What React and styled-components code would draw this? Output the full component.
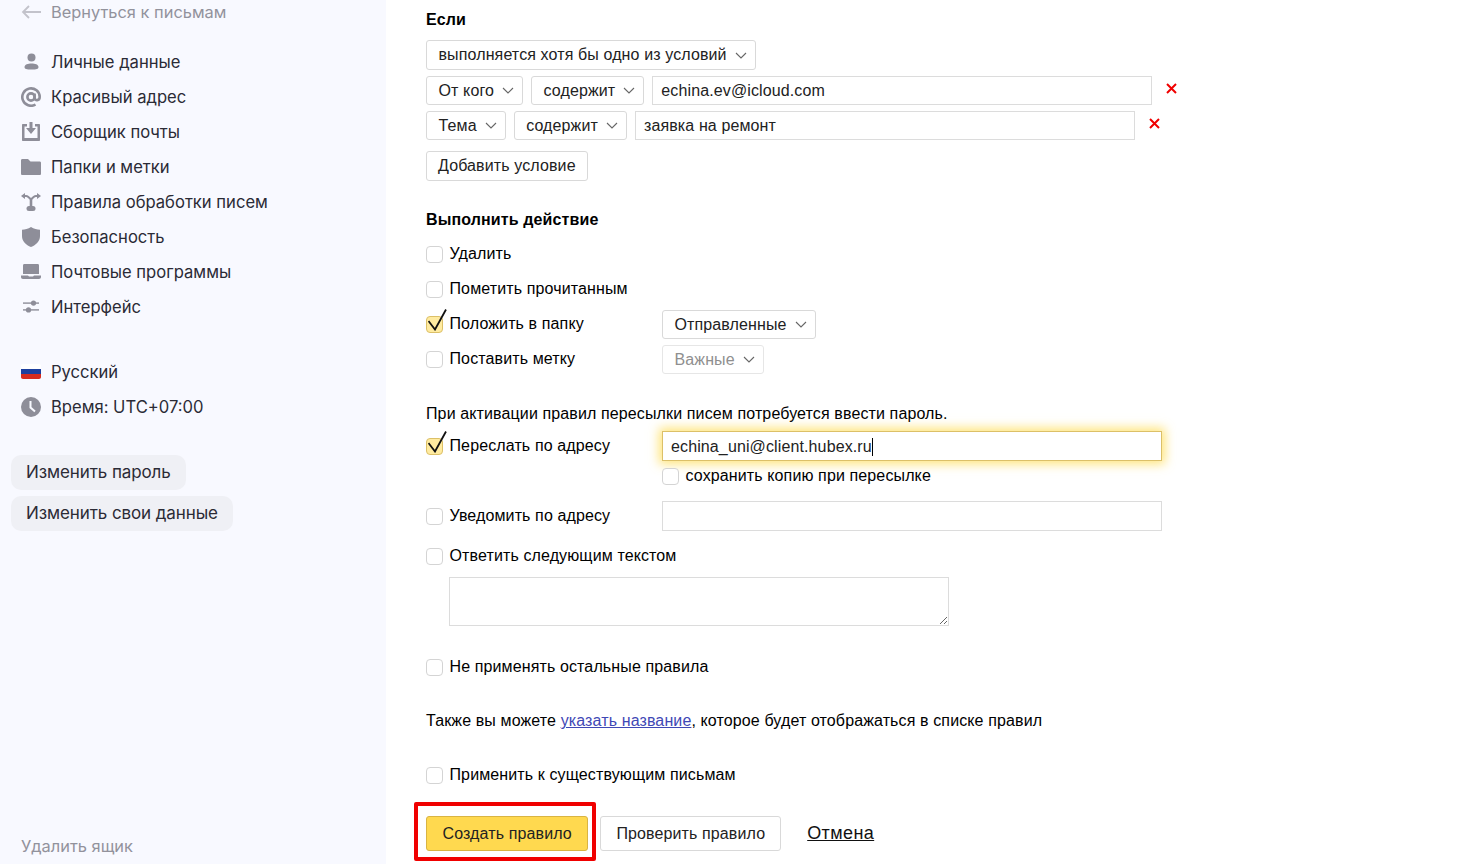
import React from 'react';
import styled, { createGlobalStyle } from 'styled-components';

const Global = createGlobalStyle`
  html, body { margin: 0; padding: 0; height: 100%; overflow: hidden; background: #fff; }
  * { box-sizing: border-box; }
`;

const Page = styled.div`
  display: flex;
  width: 1457px;
  height: 864px;
  overflow: hidden;
`;

const Sidebar = styled.aside`
  width: 386px;
  height: 864px;
  flex: none;
  display: flex;
  flex-direction: column;
  background: #f8f9ff;
  font-family: Inter, "Noto Sans", sans-serif;
  font-size: 16.6px;
  color: #2b2b36;
`;

const BackLink = styled.a`
  display: flex;
  align-items: center;
  gap: 10px;
  height: 24px;
  padding-left: 21px;
  margin-bottom: 20px;
  font-size: 16.4px;
  color: #92929c;
`;

const NavRow = styled.a`
  display: flex;
  align-items: center;
  gap: 10px;
  height: 35px;
  padding-left: 21px;
`;

const IconBox = styled.span`
  display: flex;
  width: 20px;
  height: 20px;
  flex: none;
  align-items: center;
  justify-content: center;
`;

const NavGroup = styled.nav`
  display: flex;
  flex-direction: column;
  margin-bottom: ${(p) => p.$gap || 30}px;
`;

const PillGroup = styled.div`
  display: flex;
  flex-direction: column;
  align-items: flex-start;
  gap: 6px;
  padding-left: 11px;
`;

const Pill = styled.button`
  height: 35px;
  padding: 0 15px 2px;
  border: 0;
  border-radius: 10px;
  background: #eff0f5;
  color: #2b2b36;
  font: inherit;
  font-size: 17px;
  letter-spacing: -0.1px;
`;

const RemoveBox = styled.a`
  margin-top: auto;
  padding: 0 0 7px 21px;
  line-height: 22px;
  font-size: 16.4px;
  color: #92929c;
`;

const Main = styled.main`
  flex: 1;
  padding-left: 40px;
  font-family: "Liberation Sans", Arial, sans-serif;
  font-size: 16px;
  letter-spacing: 0.12px;
  color: #000;
`;

const Heading = styled.h3`
  height: 20px;
  margin: ${(p) => p.$top}px 0 0;
  font-size: 16px;
  line-height: 20px;
  font-weight: 700;
`;

const Row = styled.div`
  display: flex;
  align-items: center;
  gap: 8px;
  height: ${(p) => p.$h || 30}px;
  margin-top: ${(p) => p.$top || 0}px;
`;

const IndentedRow = styled(Row)`
  padding-left: 236px;
`;

const Select = styled.div`
  display: flex;
  align-items: center;
  gap: 8px;
  height: ${(p) => p.$h || 29}px;
  padding: 0 8px 0 11.5px;
  background: #fff;
  border: 1px solid ${(p) => (p.$disabled ? '#e6e6e6' : '#d9d9d9')};
  border-radius: 3px;
  color: ${(p) => (p.$disabled ? '#8f8f8f' : '#222')};
  white-space: nowrap;
`;

const Button = styled.button`
  height: ${(p) => p.$h || 30}px;
  padding: 0 ${(p) => p.$pad || 11}px;
  background: #fff;
  border: 1px solid #d9d9d9;
  border-radius: 3px;
  color: #222;
  font: inherit;
  letter-spacing: inherit;
`;

const PrimaryButton = styled(Button)`
  background: #ffd94f;
  border-color: #d9b443;
`;

const Field = styled.div`
  display: flex;
  align-items: center;
  width: 500px;
  height: ${(p) => p.$h || 29}px;
  padding: 0 8px;
  background: #fff;
  border: 1px solid #dcdcdc;
  color: #222;
  white-space: nowrap;
`;

const FocusField = styled(Field)`
  padding-top: 1px;
  border-color: #dcc068;
  box-shadow: 0 0 10px 3px rgba(255, 219, 77, 0.75);
`;

const Caret = styled.span`
  width: 1px;
  height: 18px;
  background: #000;
`;

const RemoveCross = styled.svg`
  width: 11px;
  height: 11px;
  margin: -4px 0 0 6px;
`;

const CheckLabel = styled.label`
  display: flex;
  align-items: center;
  gap: 6.5px;
  width: ${(p) => (p.$w ? `${p.$w}px` : 'auto')};
  margin-bottom: ${(p) => (p.$lift ? 2 : 0)}px;
  flex: none;
  white-space: nowrap;
`;

const CheckBox = styled.span`
  position: relative;
  display: block;
  width: 17px;
  height: 17px;
  flex: none;
  margin-top: 1px;
  background: ${(p) => (p.$on ? '#ffeba0' : '#fff')};
  border: 1px solid ${(p) => (p.$on ? '#dcc068' : '#d4d4d4')};
  border-radius: 4px;
`;

const Tick = styled.svg`
  position: absolute;
  left: 1px;
  top: -8px;
  width: 20px;
  height: 22px;
`;

const Check = ({ on, w, lift, children }) => (
  <CheckLabel $w={w} $lift={lift}>
    <CheckBox $on={on}>
      {on && (
        <Tick viewBox="0 0 20 22" fill="none">
          <path d="M0.5 12 L7 20.5 L18 0.5" stroke="#111" strokeWidth="1.8" />
        </Tick>
      )}
    </CheckBox>
    {children}
  </CheckLabel>
);

const Paragraph = styled.p`
  margin: ${(p) => p.$top}px 0 0;
  height: 20px;
  line-height: 20px;
`;

const TextLink = styled.a`
  color: #3f48b5;
  text-decoration: underline;
`;

const ReplyText = styled.textarea`
  display: block;
  width: 500px;
  height: 49px;
  margin: 6px 0 0 23px;
  border: 1px solid #dcdcdc;
  outline: 0;
`;

const Actions = styled.div`
  display: flex;
  align-items: center;
  margin: 12px 0 0 -12px;
`;

const Highlight = styled.div`
  display: flex;
  padding: 10px 4px 6px 8px;
  border: 4px solid #f00000;
  border-radius: 2px;
`;

const CheckButton = styled(Button)`
  margin: 4px 0 0 4px;
`;

const Cancel = styled.a`
  margin: 4px 0 0 26px;
  font-size: 18px;
  letter-spacing: 0.4px;
  color: #111;
  text-decoration: underline;
`;

const Chevron = () => (
  <svg width="12" height="7" viewBox="0 0 12 7" fill="none">
    <path d="M1 1 L6 6 L11 1" stroke="#666" strokeWidth="1.1" />
  </svg>
);

const Cross = () => (
  <RemoveCross viewBox="0 0 11 11">
    <path d="M1 1 L10 10 M10 1 L1 10" stroke="#f00000" strokeWidth="2" />
  </RemoveCross>
);

const G = '#8e8e99';

const icons = {
  back: (
    <svg width="20" height="14" viewBox="0 0 20 14" fill="none">
      <path d="M8 1 L2 7 L8 13 M2 7 H20" stroke="#c3c3cb" strokeWidth="1.8" />
    </svg>
  ),
  user: (
    <svg width="15" height="17" viewBox="0 0 15 17" fill={G}>
      <circle cx="7.5" cy="4.5" r="4" />
      <path d="M0.5 14 C0.5 11.5 4 10.5 7.5 10.5 S14.5 11.5 14.5 14 C14.5 16 12.5 16.5 7.5 16.5 S0.5 16 0.5 14Z" />
    </svg>
  ),
  at: (
    <svg width="20" height="20" viewBox="0 0 20 20" fill="none" stroke={G} strokeWidth="2.6">
      <circle cx="10" cy="10" r="3.6" />
      <path d="M13.6 6.5 V11 C13.6 14 18.7 14 18.7 10 A8.7 8.7 0 1 0 14.5 17.5" />
    </svg>
  ),
  inbox: (
    <svg width="18" height="19" viewBox="0 0 18 19" fill={G}>
      <path d="M1 2 H5 V4.5 H2.5 V16 H15.5 V4.5 H13 V2 H17 C17.6 2 18 2.4 18 3 V18 C18 18.6 17.6 19 17 19 H1 C.4 19 0 18.6 0 18 V3 C0 2.4 .4 2 1 2Z" />
      <path d="M7.5 0 H10.5 V6 H14 L9 12 L4 6 H7.5 Z" />
    </svg>
  ),
  folder: (
    <svg width="20" height="16" viewBox="0 0 20 16" fill={G}>
      <path d="M0 1.5 C0 .5 .5 0 1.5 0 H7 L9.5 2.5 H18.5 C19.5 2.5 20 3 20 4 V14.5 C20 15.5 19.5 16 18.5 16 H1.5 C.5 16 0 15.5 0 14.5 Z" />
    </svg>
  ),
  rules: (
    <svg width="20" height="18" viewBox="0 0 20 18" fill={G}>
      <path d="M0 3 L4 0 V2 H5 C7 2 8.5 3.5 10 5 C11.5 3.5 13 2 15 2 H16 V0 L20 3 L16 6 V4 H15 C13.5 4 12.5 5.5 11.3 6.8 V14 H8.7 V6.8 C7.5 5.5 6.5 4 5 4 H4 V6 Z" />
      <rect x="5.5" y="13" width="9" height="5" rx="2.5" />
    </svg>
  ),
  shield: (
    <svg width="18" height="20" viewBox="0 0 18 20" fill={G}>
      <path d="M9 0 C12 1.8 15 2.6 18 2.8 V9 C18 14.5 14 18 9 20 C4 18 0 14.5 0 9 V2.8 C3 2.6 6 1.8 9 0Z" />
    </svg>
  ),
  laptop: (
    <svg width="20" height="15" viewBox="0 0 20 15" fill={G}>
      <path d="M3.5 0 H16.5 C17.5 0 18 .5 18 1.5 V10 H2 V1.5 C2 .5 2.5 0 3.5 0Z" />
      <path d="M0 11.5 H7 L8 12.5 H12 L13 11.5 H20 V13 C20 14.2 19.2 15 18 15 H2 C.8 15 0 14.2 0 13Z" />
    </svg>
  ),
  sliders: (
    <svg width="16" height="13" viewBox="0 0 16 13" fill={G}>
      <rect y="2.4" width="16" height="1.4" />
      <rect y="9.2" width="16" height="1.4" />
      <circle cx="10.5" cy="3.1" r="2.6" />
      <circle cx="5.5" cy="9.9" r="2.6" />
    </svg>
  ),
  flag: (
    <svg width="20" height="15" viewBox="0 0 20 15">
      <path d="M2 0 H18 C19.2 0 20 .8 20 2 V5 H0 V2 C0 .8 .8 0 2 0Z" fill="#fff" />
      <rect y="5" width="20" height="5" fill="#1c3f9e" />
      <path d="M0 10 H20 V13 C20 14.2 19.2 15 18 15 H2 C.8 15 0 14.2 0 13Z" fill="#d52b1e" />
    </svg>
  ),
  clock: (
    <svg width="20" height="20" viewBox="0 0 20 20">
      <circle cx="10" cy="10" r="10" fill={G} />
      <path d="M9.5 4 V10.5 L14 14.5" stroke="#f8f9ff" strokeWidth="2" fill="none" />
    </svg>
  ),
};

const Nav = ({ icon, children }) => (
  <NavRow>
    <IconBox>{icons[icon]}</IconBox>
    {children}
  </NavRow>
);

export default function App() {
  return (
    <Page>
      <Global />
      <Sidebar>
        <BackLink>
          <IconBox>{icons.back}</IconBox>
          Вернуться к письмам
        </BackLink>
        <NavGroup>
          <Nav icon="user">Личные данные</Nav>
          <Nav icon="at">Красивый адрес</Nav>
          <Nav icon="inbox">Сборщик почты</Nav>
          <Nav icon="folder">Папки и метки</Nav>
          <Nav icon="rules">Правила обработки писем</Nav>
          <Nav icon="shield">Безопасность</Nav>
          <Nav icon="laptop">Почтовые программы</Nav>
          <Nav icon="sliders">Интерфейс</Nav>
        </NavGroup>
        <NavGroup $gap={31}>
          <Nav icon="flag">Русский</Nav>
          <Nav icon="clock">Время: UTC+07:00</Nav>
        </NavGroup>
        <PillGroup>
          <Pill>Изменить пароль</Pill>
          <Pill>Изменить свои данные</Pill>
        </PillGroup>
        <RemoveBox>Удалить ящик</RemoveBox>
      </Sidebar>

      <Main>
        <Heading $top={10}>Если</Heading>
        <Row $top={10}>
          <Select $h={30}>выполняется хотя бы одно из условий <Chevron /></Select>
        </Row>
        <Row $top={6} $h={29}>
          <Select>От кого <Chevron /></Select>
          <Select>содержит <Chevron /></Select>
          <Field>echina.ev@icloud.com</Field>
          <Cross />
        </Row>
        <Row $top={6} $h={29}>
          <Select>Тема <Chevron /></Select>
          <Select>содержит <Chevron /></Select>
          <Field>заявка на ремонт</Field>
          <Cross />
        </Row>
        <Row $top={11}>
          <Button>Добавить условие</Button>
        </Row>

        <Heading $top={29}>Выполнить действие</Heading>
        <Row $top={9} $h={29}><Check>Удалить</Check></Row>
        <Row $top={6} $h={29}><Check>Пометить прочитанным</Check></Row>
        <Row $top={7} $h={29}>
          <Check on lift w={228}>Положить в папку</Check>
          <Select>Отправленные <Chevron /></Select>
        </Row>
        <Row $top={6} $h={29}>
          <Check lift w={228}>Поставить метку</Check>
          <Select $disabled>Важные <Chevron /></Select>
        </Row>

        <Paragraph $top={30}>При активации правил пересылки писем потребуется ввести пароль.</Paragraph>
        <Row $top={7}>
          <Check on w={228}>Переслать по адресу</Check>
          <FocusField $h={30}>echina_uni@client.hubex.ru<Caret /></FocusField>
        </Row>
        <IndentedRow $top={5} $h={20}>
          <Check>сохранить копию при пересылке</Check>
        </IndentedRow>
        <Row $top={15}>
          <Check w={228}>Уведомить по адресу</Check>
          <Field $h={30} />
        </Row>
        <Row $top={10}><Check>Ответить следующим текстом</Check></Row>
        <ReplyText />
        <Row $top={26}><Check>Не применять остальные правила</Check></Row>
        <Paragraph $top={29}>
          Также вы можете <TextLink>указать название</TextLink>, которое будет отображаться в списке правил
        </Paragraph>
        <Row $top={29}><Check>Применить к существующим письмам</Check></Row>
        <Actions>
          <Highlight>
            <PrimaryButton $h={35} $pad={15.5}>Создать правило</PrimaryButton>
          </Highlight>
          <CheckButton $h={35} $pad={15}>Проверить правило</CheckButton>
          <Cancel>Отмена</Cancel>
        </Actions>
      </Main>
    </Page>
  );
}
